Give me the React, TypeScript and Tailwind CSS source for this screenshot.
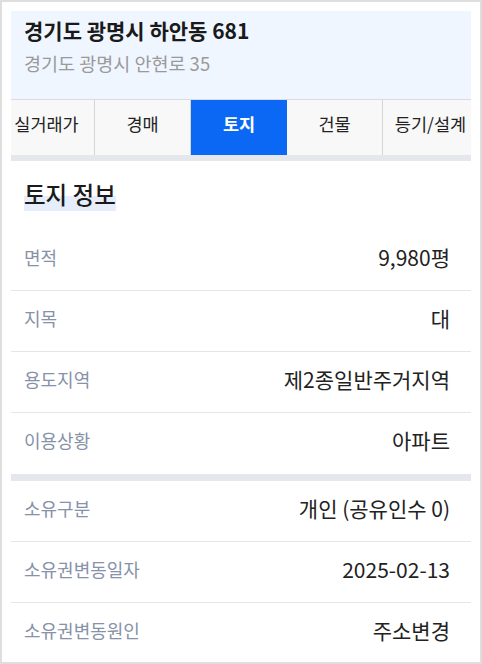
import React from "react";

const font = { fontFamily: '"Noto Sans CJK KR", "Noto Sans", sans-serif' };

function Row({ label, value, border = true }: { label: string; value: string; border?: boolean }) {
  return (
    <div
      className={`flex h-[61px] items-center justify-between pb-[7px] pl-[13px] pr-[21px] ${border ? "border-b border-[#e6e6e6]" : ""}`}
    >
      <span className="text-[18px] leading-[24px] text-[#8792a8]">{label}</span>
      <span className="text-[21px] leading-[26px] text-[#222222]">{value}</span>
    </div>
  );
}

export default function App() {
  const tabs = ["실거래가", "경매", "토지", "건물", "등기/설계"];
  return (
    <div style={font} className="h-[664px] w-[482px] overflow-hidden border-2 border-[#dedede] bg-white p-[9px]">
      <div className="h-[88px] bg-[#f0f6ff] pl-[13px] pt-[7px]">
        <div className="text-[21px] font-bold leading-[24px] text-[#1a1a1a]">경기도 광명시 하안동 681</div>
        <div className="mt-[8px] text-[18.5px] leading-[26px] text-[#9a9a9a]">경기도 광명시 안현로 35</div>
      </div>
      <div className="h-[56px] overflow-hidden border-t border-[#dcdcdc] bg-[#f8f8f8]">
        <div className="ml-[-12px] flex h-full w-[600px]">
          {tabs.map((t) =>
            t === "토지" ? (
              <div key={t} className="flex w-[96px] items-center justify-center bg-[#0a68f5] pb-[6px] text-[17.5px] font-bold text-white">
                {t}
              </div>
            ) : (
              <div key={t} className="flex w-[96px] items-center justify-center border-r border-[#d6d6d6] pb-[6px] text-[17.5px] text-[#222222]">
                {t}
              </div>
            )
          )}
        </div>
      </div>
      <div className="h-[6px] bg-[#e4e7eb]" />
      <div className="h-[69px] pl-[13px] pt-[19px]">
        <span className="inline-block bg-[linear-gradient(transparent_52%,#e6eefc_52%)] pb-[3px] text-[23.5px] font-medium leading-[28px] text-[#1a1a1a]">
          토지 정보
        </span>
      </div>
      <Row label="면적" value="9,980평" />
      <Row label="지목" value="대" />
      <Row label="용도지역" value="제2종일반주거지역" />
      <Row label="이용상황" value="아파트" border={false} />
      <div className="h-[7px] bg-[#e4e7eb]" />
      <Row label="소유구분" value="개인 (공유인수 0)" />
      <Row label="소유권변동일자" value="2025-02-13" />
      <Row label="소유권변동원인" value="주소변경" border={false} />
    </div>
  );
}
